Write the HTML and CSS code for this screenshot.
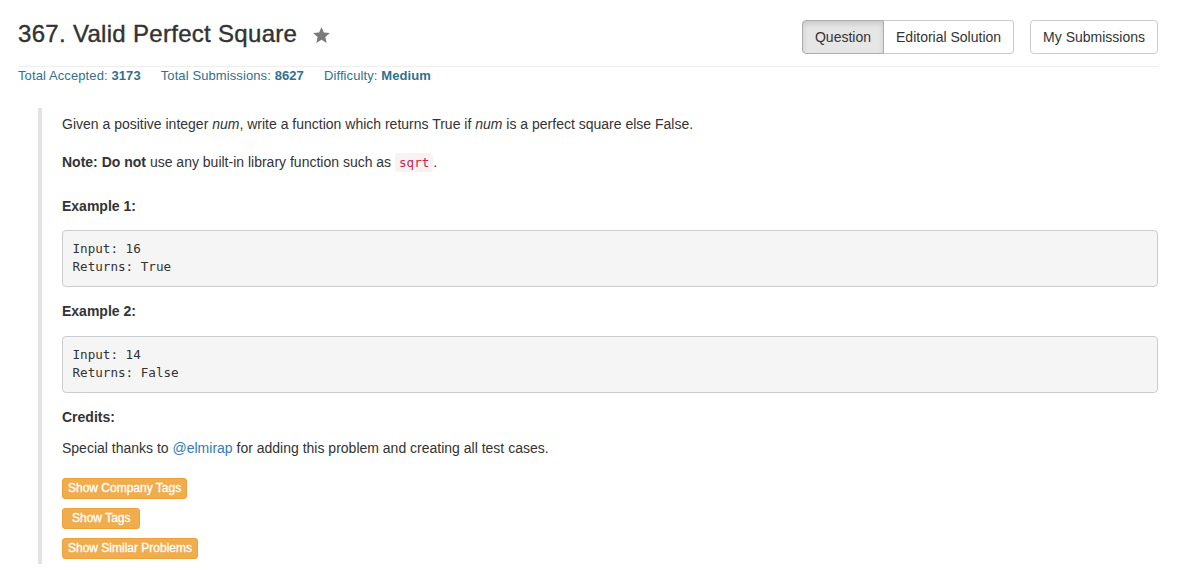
FILE: index.html
```html
<!DOCTYPE html>
<html>
<head>
<meta charset="utf-8">
<link rel="stylesheet" href="styles.css">
</head>
<body>
<div class="page">
  <div class="header">
    <h3 class="title">367. Valid Perfect Square
      <svg class="star" viewBox="2 2 20 19" width="17" height="16"><path d="M12 17.27L18.18 21l-1.64-7.03L22 9.24l-7.19-.61L12 2 9.19 8.63 2 9.24l5.46 4.73L5.82 21z" fill="#7a7a7a"/></svg>
    </h3>
    <div class="actions">
      <div class="btn-group">
        <a class="btn btn-active">Question</a><a class="btn btn-right">Editorial Solution</a>
      </div>
      <a class="btn">My Submissions</a>
    </div>
  </div>
  <hr class="rule">
  <div class="meta">
    <span class="meta-item">Total Accepted: <b>3173</b></span>
    <span class="meta-item">Total Submissions: <b>8627</b></span>
    <span class="meta-item">Difficulty: <b>Medium</b></span>
  </div>
  <blockquote class="desc">
    <p class="p1">Given a positive integer <em>num</em>, write a function which returns True if <em>num</em> is a perfect square else False.</p>
    <p class="p2"><b>Note:</b> <b>Do not</b> use any built-in library function such as <code class="code">sqrt</code>.</p>
    <p class="p3"><b>Example 1:</b></p>
    <pre class="pre pre1">Input: 16
Returns: True</pre>
    <p class="p4"><b>Example 2:</b></p>
    <pre class="pre pre2">Input: 14
Returns: False</pre>
    <p class="p5"><b>Credits:</b></p>
    <p class="p6">Special thanks to <a class="link">@elmirap</a> for adding this problem and creating all test cases.</p>
    <div class="tags">
      <span class="tag">Show Company Tags</span>
      <span class="tag tag-wide">Show Tags</span>
      <span class="tag">Show Similar Problems</span>
    </div>
  </blockquote>
</div>
</body>
</html>
```

FILE: styles.css
```css
html, body {
  margin: 0;
  padding: 0;
  background: #fff;
}
body {
  font-family: "Liberation Sans", Arial, sans-serif;
  font-size: 14px;
  line-height: 20px;
  color: #333;
}
.page {
  width: 1140px;
  margin-left: 18px;
}
.header {
  display: flex;
  justify-content: space-between;
  align-items: flex-start;
  padding-top: 20px;
}
.title {
  margin: 0;
  font-size: 24px;
  line-height: 26.4px;
  font-weight: normal;
  letter-spacing: 0.3px;
  -webkit-text-stroke: 0.4px #333;
  color: #333;
  display: flex;
  align-items: center;
  padding-top: 1px;
}
.star {
  margin-left: 16px;
  margin-top: 1px;
}
.actions {
  display: flex;
  gap: 16px;
}
.btn-group {
  display: flex;
}
.btn {
  display: inline-block;
  padding: 6px 12px;
  font-size: 14px;
  line-height: 20px;
  color: #333;
  background: #fff;
  border: 1px solid #ccc;
  border-radius: 4px;
  white-space: nowrap;
}
.btn-active {
  background: #e6e6e6;
  border-color: #adadad;
  border-top-right-radius: 0;
  border-bottom-right-radius: 0;
  box-shadow: inset 0 3px 5px rgba(0,0,0,0.125);
}
.btn-right {
  border-left: 0;
  border-top-left-radius: 0;
  border-bottom-left-radius: 0;
}
.rule {
  margin: 12px 0 0;
  border: 0;
  border-top: 1px solid #eee;
  height: 0;
}
.meta {
  display: flex;
  font-size: 13px;
  line-height: 18.6px;
  color: #31708f;
}
.meta-item {
  margin-right: 20px;
  letter-spacing: 0.1px;
}
.desc {
  margin: 22px 0 0 20px;
  padding: 6px 0 5px 20px;
  border-left: 4px solid #e2e2e2;
}
.desc p {
  margin: 0;
}
.p2 { margin-top: 18px !important; }
.p3 { margin-top: 23px !important; }
.p4 { margin-top: 14px !important; }
.p5 { margin-top: 14px !important; }
.p6 { margin-top: 11px !important; }
.code {
  font-family: "DejaVu Sans Mono", Menlo, monospace;
  font-size: 12.6px;
  padding: 2px 4px;
  color: #c7254e;
  background: #f9f2f4;
  border-radius: 4px;
}
.pre {
  margin: 14px 0 0;
  padding: 9.5px;
  font-family: "DejaVu Sans Mono", Menlo, monospace;
  font-size: 12.6px;
  line-height: 18px;
  color: #333;
  background: #f5f5f5;
  border: 1px solid #ccc;
  border-radius: 4px;
  white-space: pre;
}
.pre2 { margin-top: 15px; }
.link {
  color: #337ab7;
  text-decoration: none;
}
.tags {
  margin-top: 20px;
  display: flex;
  flex-direction: column;
  align-items: flex-start;
  gap: 9px;
}
.tag {
  display: inline-block;
  padding: 0 5px;
  font-size: 12px;
  line-height: 19px;
  color: #fff;
  -webkit-text-stroke: 0.3px #fff;
  background: #f0ad4e;
  border: 1px solid #eea236;
  border-radius: 3px;
  white-space: nowrap;
}
.tag-wide {
  padding: 0 9px;
}
```
